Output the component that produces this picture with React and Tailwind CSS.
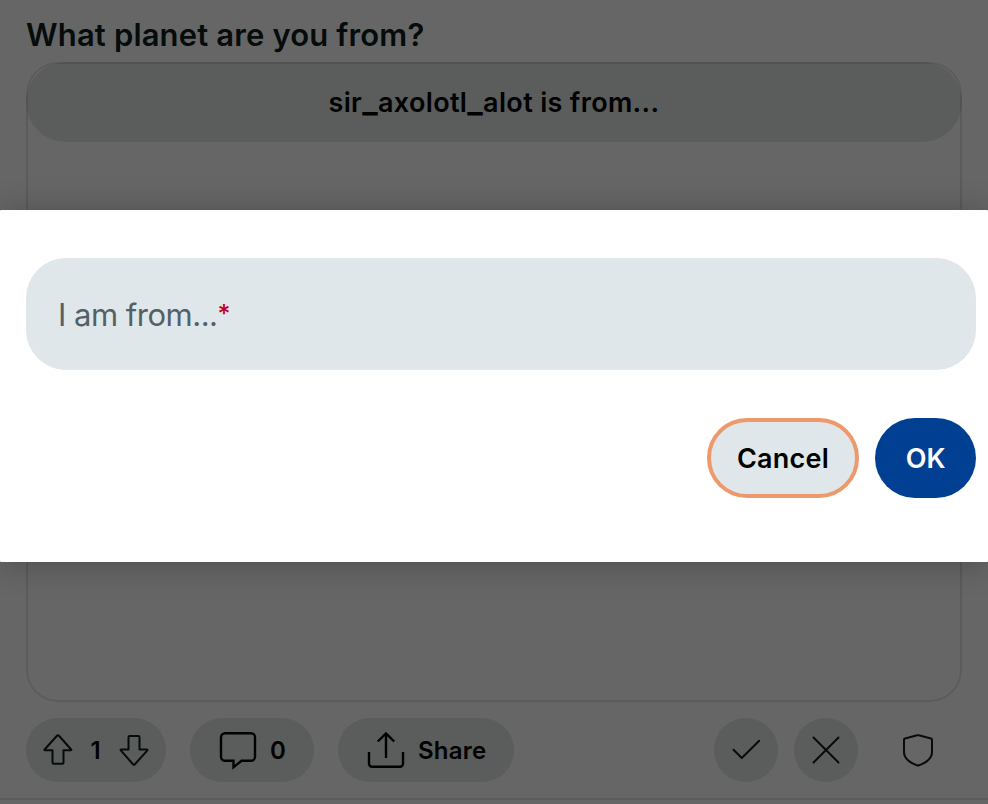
const ink = 'stroke-[#060b0c]';

function Icon({ w, h, className = '', children }) {
  return (
    <svg
      width={w}
      height={h}
      viewBox={`0 0 ${w} ${h}`}
      fill="none"
      strokeLinecap="round"
      strokeLinejoin="round"
      className={`block shrink-0 ${className}`}
    >
      {children}
    </svg>
  );
}

function VotePill() {
  return (
    <div className="flex h-16 w-[140px] items-center rounded-full bg-[#5a5d5c] pl-4">
      <Icon w={32} h={32} className={ink}>
        <path strokeWidth="2" d="M15.200 1.500a1 1 0 0 1 1.500 0L29.200 15.500c.3.5.1.8-.5.8H21.500v12.200q0 1.200-1.200 1.200h-8.600q-1.200 0-1.200-1.200V16.300H3c-.6 0-.8-.4-.4-.8Z" />
      </Icon>
      <span className="w-11 pt-0.5 text-center text-[24px] leading-8 font-semibold"><span className="-ml-px">1</span></span>
      <Icon w={32} h={32} className={ink}>
        <path strokeWidth="2" d="M15.200 30.500a1 1 0 0 0 1.500 0L29.400 16.300c.3-.5.1-.8-.5-.8h-7.400V3.300q0-1.200-1.200-1.200h-8.600q-1.200 0-1.200 1.200V15.500H3.200c-.6 0-.8.4-.4.8Z" />
      </Icon>
    </div>
  );
}

function CommentPill() {
  return (
    <div className="ml-6 flex h-16 w-[124px] items-center rounded-full bg-[#5a5d5c] pl-[28px]">
      <Icon w={40} h={40} className="stroke-black">
        <path strokeWidth="2.400" strokeLinejoin="miter" d="M7 3.200h26a4 4 0 0 1 4 4V26.800a4 4 0 0 1-4 4H23.500L15.500 37.300V30.800H7a4 4 0 0 1-4-4V7.200a4 4 0 0 1 4-4Z" />
      </Icon>
      <span className="ml-[12px] pt-0.5 text-[24px] leading-8 font-semibold">0</span>
    </div>
  );
}

function SharePill() {
  return (
    <div className="ml-6 flex h-16 w-44 items-center rounded-full bg-[#5a5d5c] pl-[28px]">
      <Icon w={40} h={40} className="stroke-black">
        <path strokeWidth="2.400" strokeLinecap="butt" d="M3 22v11.800a3 3 0 0 0 3 3h28a3 3 0 0 0 3-3V22M20 28V4" />
        <path strokeWidth="2.400" strokeLinecap="butt" d="M11.800 11.500 20 3.300l8.200 8.200" />
      </Icon>
      <span className="ml-[12px] pt-0.5 text-[24px] leading-8 font-semibold tracking-[0.2px]">Share</span>
    </div>
  );
}

function Post() {
  return (
    <div className="flex h-[804px] flex-col bg-[#666666] text-black">
      <h1 className="h-[62px] pt-[15px] pl-[26px] text-[31px] leading-10 font-semibold tracking-[0.15px] whitespace-nowrap text-[#060b0c]">
        What planet are you from?
      </h1>
      <div className="relative mx-[26px] h-[640px] overflow-hidden rounded-[32px]">
        <div className="flex h-20 items-center justify-center rounded-[40px] bg-[#5a5d5c] pb-0.5 text-[27px] leading-8 font-semibold tracking-[0.34px] whitespace-nowrap">
          <span>
            sir<span className="text-[33px] leading-none">_</span>axolotl<span className="text-[33px] leading-none">_</span>alot is from...
          </span>
        </div>
        <div className="pointer-events-none absolute inset-0 rounded-[32px] border-2 border-black/10" />
      </div>
      <div className="mt-4 flex px-[26px]">
        <VotePill />
        <CommentPill />
        <SharePill />
        <div className="mr-3 ml-auto flex gap-4">
          <div className="flex size-16 items-center justify-center rounded-full bg-[#5a5d5c]">
            <Icon w={32} h={32} className={ink}>
              <path strokeWidth="2" d="M3.500 15.800 11.800 24 29.200 6.800" />
            </Icon>
          </div>
          <div className="flex size-16 items-center justify-center rounded-full bg-[#5a5d5c]">
            <Icon w={32} h={32} className={ink}>
              <path strokeWidth="2" d="M3.500 3.500 28.500 28.500M28.500 3.500 3.500 28.500" />
            </Icon>
          </div>
          <div className="ml-3 flex size-16 items-center justify-center">
            <Icon w={32} h={34} className={ink}>
              <path strokeWidth="2" d="M15.200 2.300q.8-.3 1.600 0L29 5.500q1 .3 1 1.300V19c0 7-7 11.500-13 13.200q-1 .4-2 0C9 30.500 2 26 2 19V6.800q0-1 1-1.300Z" />
            </Icon>
          </div>
        </div>
      </div>
      <div className="mt-4 h-0.5 bg-[#5c5c5c]" />
    </div>
  );
}

function Dialog() {
  return (
    <div className="absolute inset-x-0 top-[210px] h-[352px] rounded-[1px] bg-white pt-12 pr-3 pl-[26px] shadow-[0_2px_32px_rgba(0,0,0,0.25)]">
      <div className="flex h-28 items-center rounded-[40px] bg-[#e0e7ea] pt-0.5 pl-8 text-[31px] tracking-[-0.5px] whitespace-nowrap text-[#536167]">
        <span>I am from...</span>
        <span className="text-[25px] font-medium text-[#ba0023]">*</span>
      </div>
      <div className="mt-12 flex justify-end gap-4 text-[27px] font-semibold">
        <button className="h-20 w-[152px] rounded-full border-4 border-[#ee996b] bg-[#e0e7ea] pt-0.5 tracking-[0.25px] text-black">Cancel</button>
        <button className="h-20 w-[101px] rounded-full bg-[#003f91] pt-0.5 text-white">OK</button>
      </div>
    </div>
  );
}

export default function App() {
  return (
    <div className="relative h-[804px] w-[988px] overflow-hidden font-['Inter','Liberation_Sans',sans-serif]">
      <Post />
      <Dialog />
    </div>
  );
}
